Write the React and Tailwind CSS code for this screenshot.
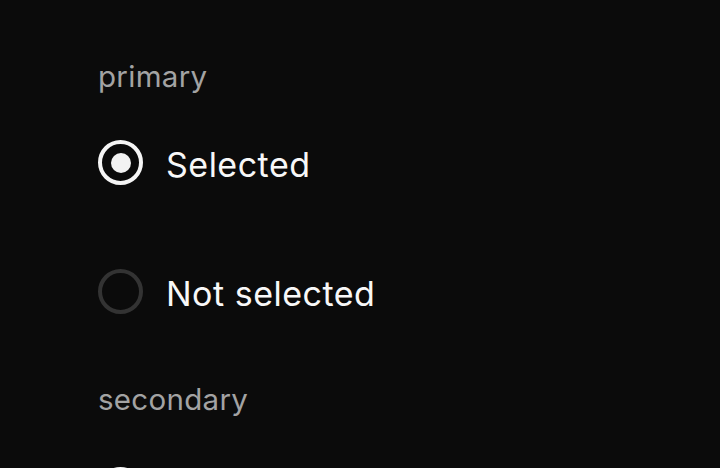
export default function App() {
  const font = { fontFamily: 'Inter, "Noto Sans", sans-serif' };
  const Radio = ({ selected }) =>
    selected ? (
      <div className="w-[45px] h-[45px] rounded-full border-4 border-[#f5f5f5] flex items-center justify-center shrink-0">
        <div className="w-[20px] h-[20px] rounded-full bg-[#f2f2f2]" />
      </div>
    ) : (
      <div className="w-[45px] h-[45px] rounded-full border-4 border-[#333333] shrink-0" />
    );
  const Row = ({ selected, label, className }) => (
    <div className={"flex items-center gap-[23px] h-[45px] shrink-0 " + className}>
      <Radio selected={selected} />
      <span className="mt-[4px] text-[34px] leading-none text-[#f8f8f8] tracking-[0.5px]">{label}</span>
    </div>
  );
  return (
    <div className="w-[720px] h-[468px] overflow-hidden bg-[#0b0b0b] pl-[98px] pt-[60px] flex flex-col" style={font}>
      <div className="h-[34px] shrink-0 flex items-center text-[29.5px] leading-none text-[#a3a3a3] tracking-[0.3px]">primary</div>
      <Row selected label="Selected" className="mt-[46px]" />
      <Row label="Not selected" className="mt-[84px]" />
      <div className="mt-[69px] h-[34px] shrink-0 flex items-center text-[29.5px] leading-none text-[#a3a3a3] tracking-[0.3px]">secondary</div>
      <Row selected label="Selected" className="mt-[50px]" />
    </div>
  );
}
